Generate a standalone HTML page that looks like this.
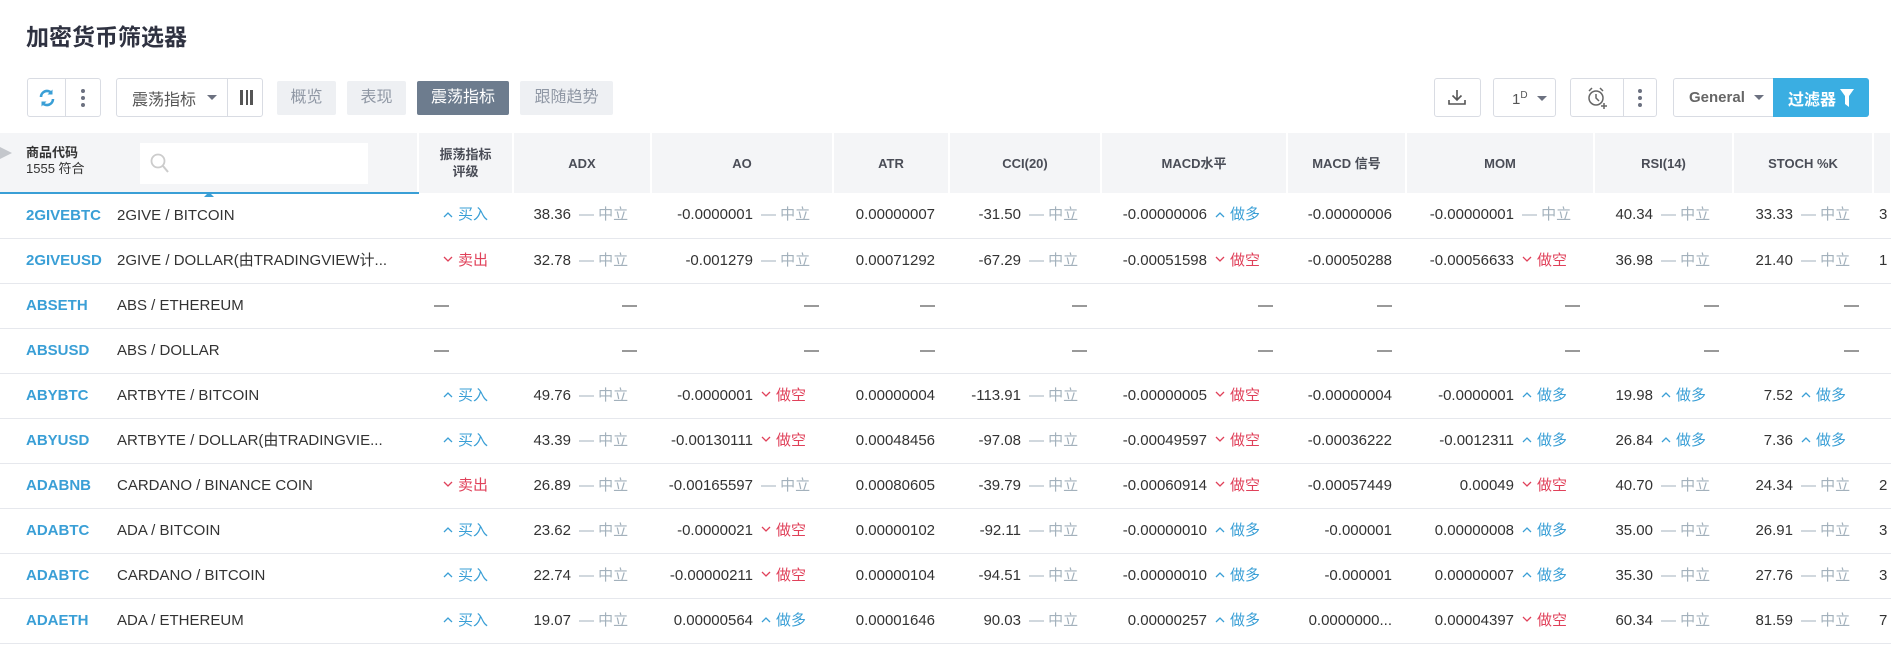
<!DOCTYPE html>
<html><head><meta charset="utf-8">
<style>
*{box-sizing:border-box;margin:0;padding:0}
body{width:1891px;height:654px;overflow:hidden;background:#fff;font-family:"Liberation Sans","Noto Sans CJK SC",sans-serif;color:#333;position:relative}
.title{position:absolute;left:26px;top:18px;font-size:23px;font-weight:bold;color:#2f3241}
.btn{position:absolute;top:78px;height:39px;border:1px solid #d9dce3;border-radius:3px;background:#fff}
.tab{position:absolute;top:81px;height:34px;background:#eef0f3;color:#9098a5;font-size:16px;line-height:34px;text-align:center;border-radius:2px}
.tab.on{background:#6d7c8e;color:#fff}
.dots{position:absolute;width:4px;height:4px;background:#6c7180;border-radius:2px}
table{position:absolute;left:0;top:133px;border-collapse:collapse;table-layout:fixed;width:1891px;font-size:15px}
th{height:60px;background:#f4f5f7;border-right:2px solid #fff;font-size:13px;color:#4a4d57;font-weight:bold;text-align:center;line-height:17px}
td{height:45px;line-height:20px;vertical-align:middle;border-bottom:1px solid #e6e8ed;text-align:right;padding-right:14px;white-space:nowrap;overflow:hidden}
td.tk{text-align:left;padding-left:26px;color:#3a9fd6;font-weight:bold;padding-right:0}
td.ds{text-align:left;padding-right:0;text-overflow:clip}
td.rt{text-align:center;padding-right:0}
.s{display:inline-block;width:58px;margin-left:8px;text-align:left}
.n{color:#a3b1bc}.b{color:#3a9fd6}.r{color:#e0415a}
svg.c{display:inline-block;width:10px;height:7px;margin-right:5px;vertical-align:middle;position:relative;top:-1px}
</style></head><body>
<div class="title">加密货币筛选器</div>

<div class="btn" style="left:27px;width:74px"></div>
<div style="position:absolute;left:65px;top:79px;width:1px;height:37px;background:#d9dce3"></div>
<svg style="position:absolute;left:37px;top:88px" width="20" height="20" viewBox="0 0 20 20"><path d="M4 9a6 6 0 0 1 10.5-4M16 11a6 6 0 0 1-10.5 4" fill="none" stroke="#3a9fd6" stroke-width="2.6"/><path d="M15.5 1.5v5h-5z M4.5 18.5v-5h5z" fill="#3a9fd6"/></svg>
<div class="dots" style="left:81px;top:89px"></div><div class="dots" style="left:81px;top:96px"></div><div class="dots" style="left:81px;top:103px"></div>

<div class="btn" style="left:116px;width:147px"></div>
<div style="position:absolute;left:227px;top:79px;width:1px;height:37px;background:#d9dce3"></div>
<div style="position:absolute;left:132px;top:86px;font-size:16px;color:#555">震荡指标</div>
<div style="position:absolute;left:207px;top:95px;border:5px solid transparent;border-top:5px solid #6c7180"></div>
<div style="position:absolute;left:240px;top:90px;width:13px;height:15px;border-left:3px solid #555;border-right:3px solid #555"><div style="margin:0 auto;width:2px;height:15px;background:#555"></div></div>

<div class="tab" style="left:277px;width:59px">概览</div>
<div class="tab" style="left:347px;width:59px">表现</div>
<div class="tab on" style="left:417px;width:92px">震荡指标</div>
<div class="tab" style="left:520px;width:93px">跟随趋势</div>

<div class="btn" style="left:1434px;width:47px"></div>
<svg style="position:absolute;left:1447px;top:87px" width="20" height="20" viewBox="0 0 20 20"><path d="M10 3v10M5.5 8.5 10 13l4.5-4.5M2 13v4h16v-4" fill="none" stroke="#555" stroke-width="1.6"/></svg>
<div class="btn" style="left:1493px;width:63px"></div>
<div style="position:absolute;left:1512px;top:90px;font-size:15px;color:#555">1<sup style="font-size:10px">D</sup></div>
<div style="position:absolute;left:1537px;top:96px;border:5px solid transparent;border-top:5px solid #6c7180"></div>
<div class="btn" style="left:1570px;width:87px"></div>
<div style="position:absolute;left:1623px;top:79px;width:1px;height:37px;background:#d9dce3"></div>
<svg style="position:absolute;left:1586px;top:86px" width="24" height="24" viewBox="0 0 24 24"><circle cx="10" cy="12" r="7" fill="none" stroke="#666" stroke-width="1.5"/><path d="M10 8v4l3 3M3 5l3-3M17 5l-3-3M18 17v6M15 20h6" fill="none" stroke="#666" stroke-width="1.5"/></svg>
<div class="dots" style="left:1638px;top:89px"></div><div class="dots" style="left:1638px;top:96px"></div><div class="dots" style="left:1638px;top:103px"></div>
<div class="btn" style="left:1673px;width:196px"></div>
<div style="position:absolute;left:1689px;top:89px;font-size:15px;color:#666;font-weight:bold">General</div>
<div style="position:absolute;left:1754px;top:95px;border:5px solid transparent;border-top:5px solid #6c7180"></div>
<div style="position:absolute;left:1773px;top:78px;width:96px;height:39px;background:#3aaee2;border-radius:0 3px 3px 0"></div>
<div style="position:absolute;left:1788px;top:86px;font-size:16px;color:#fff;font-weight:bold">过滤器</div>
<svg style="position:absolute;left:1840px;top:89px" width="14" height="18" viewBox="0 0 14 18"><path d="M0 0h14L9 7v11L5 15V7z" fill="#fff"/></svg>

<table>
<colgroup><col style="width:117px"><col style="width:301px"><col style="width:95px"><col style="width:138px"><col style="width:182px"><col style="width:116px"><col style="width:152px"><col style="width:186px"><col style="width:119px"><col style="width:188px"><col style="width:139px"><col style="width:140px"><col style="width:18px"></colgroup>
<tr><th colspan="2" style="text-align:left;position:relative;border-bottom:2px solid #3a9fd6"><div style="position:absolute;left:0;top:14px;width:0;height:0;border-left:12px solid #c4c7cc;border-top:6px solid transparent;border-bottom:6px solid transparent"></div><div style="position:absolute;left:26px;top:12px;font-size:13px;line-height:16px;color:#333">商品代码<br><span style="font-weight:normal">1555 符合</span></div><div style="position:absolute;left:140px;top:10px;width:228px;height:41px;background:#fff"><svg style="position:absolute;left:10px;top:10px" width="20" height="22" viewBox="0 0 20 22"><circle cx="8" cy="8" r="6.5" fill="none" stroke="#ccc" stroke-width="1.8"/><path d="M13 13l5 6" stroke="#ccc" stroke-width="2"/></svg></div><div style="position:absolute;left:204px;top:54px;border:5px solid transparent;border-bottom:5px solid #3a9fd6"></div></th>
<th>振荡指标<br>评级</th><th>ADX</th><th>AO</th><th>ATR</th><th>CCI(20)</th><th>MACD水平</th><th>MACD 信号</th><th>MOM</th><th>RSI(14)</th><th>STOCH %K</th><th></th></tr>

<tr><td class="tk">2GIVEBTC</td><td class="ds">2GIVE / BITCOIN</td><td class="rt b"><svg class="c" viewBox="0 0 10 7"><path d="M1 6l4-4 4 4" fill="none" stroke="#3a9fd6" stroke-width="1.3"/></svg>买入</td><td>38.36<span class="s n">— 中立</span></td><td>-0.0000001<span class="s n">— 中立</span></td><td>0.00000007</td><td>-31.50<span class="s n">— 中立</span></td><td>-0.00000006<span class="s b"><svg class="c" viewBox="0 0 10 7"><path d="M1 6l4-4 4 4" fill="none" stroke="#3a9fd6" stroke-width="1.3"/></svg>做多</span></td><td>-0.00000006</td><td>-0.00000001<span class="s n">— 中立</span></td><td>40.34<span class="s n">— 中立</span></td><td>33.33<span class="s n">— 中立</span></td><td style="text-align:left;padding:0 0 0 6px">3</td></tr>

<tr><td class="tk">2GIVEUSD</td><td class="ds">2GIVE / DOLLAR(由TRADINGVIEW计...</td><td class="rt r"><svg class="c" viewBox="0 0 10 7"><path d="M1 1l4 4 4-4" fill="none" stroke="#e0415a" stroke-width="1.3"/></svg>卖出</td><td>32.78<span class="s n">— 中立</span></td><td>-0.001279<span class="s n">— 中立</span></td><td>0.00071292</td><td>-67.29<span class="s n">— 中立</span></td><td>-0.00051598<span class="s r"><svg class="c" viewBox="0 0 10 7"><path d="M1 1l4 4 4-4" fill="none" stroke="#e0415a" stroke-width="1.3"/></svg>做空</span></td><td>-0.00050288</td><td>-0.00056633<span class="s r"><svg class="c" viewBox="0 0 10 7"><path d="M1 1l4 4 4-4" fill="none" stroke="#e0415a" stroke-width="1.3"/></svg>做空</span></td><td>36.98<span class="s n">— 中立</span></td><td>21.40<span class="s n">— 中立</span></td><td style="text-align:left;padding:0 0 0 6px">1</td></tr>

<tr><td class="tk">ABSETH</td><td class="ds">ABS / ETHEREUM</td><td style="text-align:left;padding-left:16px">—</td><td>—</td><td>—</td><td>—</td><td>—</td><td>—</td><td>—</td><td>—</td><td>—</td><td>—</td><td></td></tr>
<tr><td class="tk">ABSUSD</td><td class="ds">ABS / DOLLAR</td><td style="text-align:left;padding-left:16px">—</td><td>—</td><td>—</td><td>—</td><td>—</td><td>—</td><td>—</td><td>—</td><td>—</td><td>—</td><td></td></tr>

<tr><td class="tk">ABYBTC</td><td class="ds">ARTBYTE / BITCOIN</td><td class="rt b"><svg class="c" viewBox="0 0 10 7"><path d="M1 6l4-4 4 4" fill="none" stroke="#3a9fd6" stroke-width="1.3"/></svg>买入</td><td>49.76<span class="s n">— 中立</span></td><td>-0.0000001<span class="s r"><svg class="c" viewBox="0 0 10 7"><path d="M1 1l4 4 4-4" fill="none" stroke="#e0415a" stroke-width="1.3"/></svg>做空</span></td><td>0.00000004</td><td>-113.91<span class="s n">— 中立</span></td><td>-0.00000005<span class="s r"><svg class="c" viewBox="0 0 10 7"><path d="M1 1l4 4 4-4" fill="none" stroke="#e0415a" stroke-width="1.3"/></svg>做空</span></td><td>-0.00000004</td><td>-0.0000001<span class="s b"><svg class="c" viewBox="0 0 10 7"><path d="M1 6l4-4 4 4" fill="none" stroke="#3a9fd6" stroke-width="1.3"/></svg>做多</span></td><td>19.98<span class="s b"><svg class="c" viewBox="0 0 10 7"><path d="M1 6l4-4 4 4" fill="none" stroke="#3a9fd6" stroke-width="1.3"/></svg>做多</span></td><td>7.52<span class="s b"><svg class="c" viewBox="0 0 10 7"><path d="M1 6l4-4 4 4" fill="none" stroke="#3a9fd6" stroke-width="1.3"/></svg>做多</span></td><td></td></tr>

<tr><td class="tk">ABYUSD</td><td class="ds">ARTBYTE / DOLLAR(由TRADINGVIE...</td><td class="rt b"><svg class="c" viewBox="0 0 10 7"><path d="M1 6l4-4 4 4" fill="none" stroke="#3a9fd6" stroke-width="1.3"/></svg>买入</td><td>43.39<span class="s n">— 中立</span></td><td>-0.00130111<span class="s r"><svg class="c" viewBox="0 0 10 7"><path d="M1 1l4 4 4-4" fill="none" stroke="#e0415a" stroke-width="1.3"/></svg>做空</span></td><td>0.00048456</td><td>-97.08<span class="s n">— 中立</span></td><td>-0.00049597<span class="s r"><svg class="c" viewBox="0 0 10 7"><path d="M1 1l4 4 4-4" fill="none" stroke="#e0415a" stroke-width="1.3"/></svg>做空</span></td><td>-0.00036222</td><td>-0.0012311<span class="s b"><svg class="c" viewBox="0 0 10 7"><path d="M1 6l4-4 4 4" fill="none" stroke="#3a9fd6" stroke-width="1.3"/></svg>做多</span></td><td>26.84<span class="s b"><svg class="c" viewBox="0 0 10 7"><path d="M1 6l4-4 4 4" fill="none" stroke="#3a9fd6" stroke-width="1.3"/></svg>做多</span></td><td>7.36<span class="s b"><svg class="c" viewBox="0 0 10 7"><path d="M1 6l4-4 4 4" fill="none" stroke="#3a9fd6" stroke-width="1.3"/></svg>做多</span></td><td></td></tr>

<tr><td class="tk">ADABNB</td><td class="ds">CARDANO / BINANCE COIN</td><td class="rt r"><svg class="c" viewBox="0 0 10 7"><path d="M1 1l4 4 4-4" fill="none" stroke="#e0415a" stroke-width="1.3"/></svg>卖出</td><td>26.89<span class="s n">— 中立</span></td><td>-0.00165597<span class="s n">— 中立</span></td><td>0.00080605</td><td>-39.79<span class="s n">— 中立</span></td><td>-0.00060914<span class="s r"><svg class="c" viewBox="0 0 10 7"><path d="M1 1l4 4 4-4" fill="none" stroke="#e0415a" stroke-width="1.3"/></svg>做空</span></td><td>-0.00057449</td><td>0.00049<span class="s r"><svg class="c" viewBox="0 0 10 7"><path d="M1 1l4 4 4-4" fill="none" stroke="#e0415a" stroke-width="1.3"/></svg>做空</span></td><td>40.70<span class="s n">— 中立</span></td><td>24.34<span class="s n">— 中立</span></td><td style="text-align:left;padding:0 0 0 6px">2</td></tr>

<tr><td class="tk">ADABTC</td><td class="ds">ADA / BITCOIN</td><td class="rt b"><svg class="c" viewBox="0 0 10 7"><path d="M1 6l4-4 4 4" fill="none" stroke="#3a9fd6" stroke-width="1.3"/></svg>买入</td><td>23.62<span class="s n">— 中立</span></td><td>-0.0000021<span class="s r"><svg class="c" viewBox="0 0 10 7"><path d="M1 1l4 4 4-4" fill="none" stroke="#e0415a" stroke-width="1.3"/></svg>做空</span></td><td>0.00000102</td><td>-92.11<span class="s n">— 中立</span></td><td>-0.00000010<span class="s b"><svg class="c" viewBox="0 0 10 7"><path d="M1 6l4-4 4 4" fill="none" stroke="#3a9fd6" stroke-width="1.3"/></svg>做多</span></td><td>-0.000001</td><td>0.00000008<span class="s b"><svg class="c" viewBox="0 0 10 7"><path d="M1 6l4-4 4 4" fill="none" stroke="#3a9fd6" stroke-width="1.3"/></svg>做多</span></td><td>35.00<span class="s n">— 中立</span></td><td>26.91<span class="s n">— 中立</span></td><td style="text-align:left;padding:0 0 0 6px">3</td></tr>

<tr><td class="tk">ADABTC</td><td class="ds">CARDANO / BITCOIN</td><td class="rt b"><svg class="c" viewBox="0 0 10 7"><path d="M1 6l4-4 4 4" fill="none" stroke="#3a9fd6" stroke-width="1.3"/></svg>买入</td><td>22.74<span class="s n">— 中立</span></td><td>-0.00000211<span class="s r"><svg class="c" viewBox="0 0 10 7"><path d="M1 1l4 4 4-4" fill="none" stroke="#e0415a" stroke-width="1.3"/></svg>做空</span></td><td>0.00000104</td><td>-94.51<span class="s n">— 中立</span></td><td>-0.00000010<span class="s b"><svg class="c" viewBox="0 0 10 7"><path d="M1 6l4-4 4 4" fill="none" stroke="#3a9fd6" stroke-width="1.3"/></svg>做多</span></td><td>-0.000001</td><td>0.00000007<span class="s b"><svg class="c" viewBox="0 0 10 7"><path d="M1 6l4-4 4 4" fill="none" stroke="#3a9fd6" stroke-width="1.3"/></svg>做多</span></td><td>35.30<span class="s n">— 中立</span></td><td>27.76<span class="s n">— 中立</span></td><td style="text-align:left;padding:0 0 0 6px">3</td></tr>

<tr><td class="tk">ADAETH</td><td class="ds">ADA / ETHEREUM</td><td class="rt b"><svg class="c" viewBox="0 0 10 7"><path d="M1 6l4-4 4 4" fill="none" stroke="#3a9fd6" stroke-width="1.3"/></svg>买入</td><td>19.07<span class="s n">— 中立</span></td><td>0.00000564<span class="s b"><svg class="c" viewBox="0 0 10 7"><path d="M1 6l4-4 4 4" fill="none" stroke="#3a9fd6" stroke-width="1.3"/></svg>做多</span></td><td>0.00001646</td><td>90.03<span class="s n">— 中立</span></td><td>0.00000257<span class="s b"><svg class="c" viewBox="0 0 10 7"><path d="M1 6l4-4 4 4" fill="none" stroke="#3a9fd6" stroke-width="1.3"/></svg>做多</span></td><td>0.0000000...</td><td>0.00004397<span class="s r"><svg class="c" viewBox="0 0 10 7"><path d="M1 1l4 4 4-4" fill="none" stroke="#e0415a" stroke-width="1.3"/></svg>做空</span></td><td>60.34<span class="s n">— 中立</span></td><td>81.59<span class="s n">— 中立</span></td><td style="text-align:left;padding:0 0 0 6px">7</td></tr>
</table>
</body></html>
